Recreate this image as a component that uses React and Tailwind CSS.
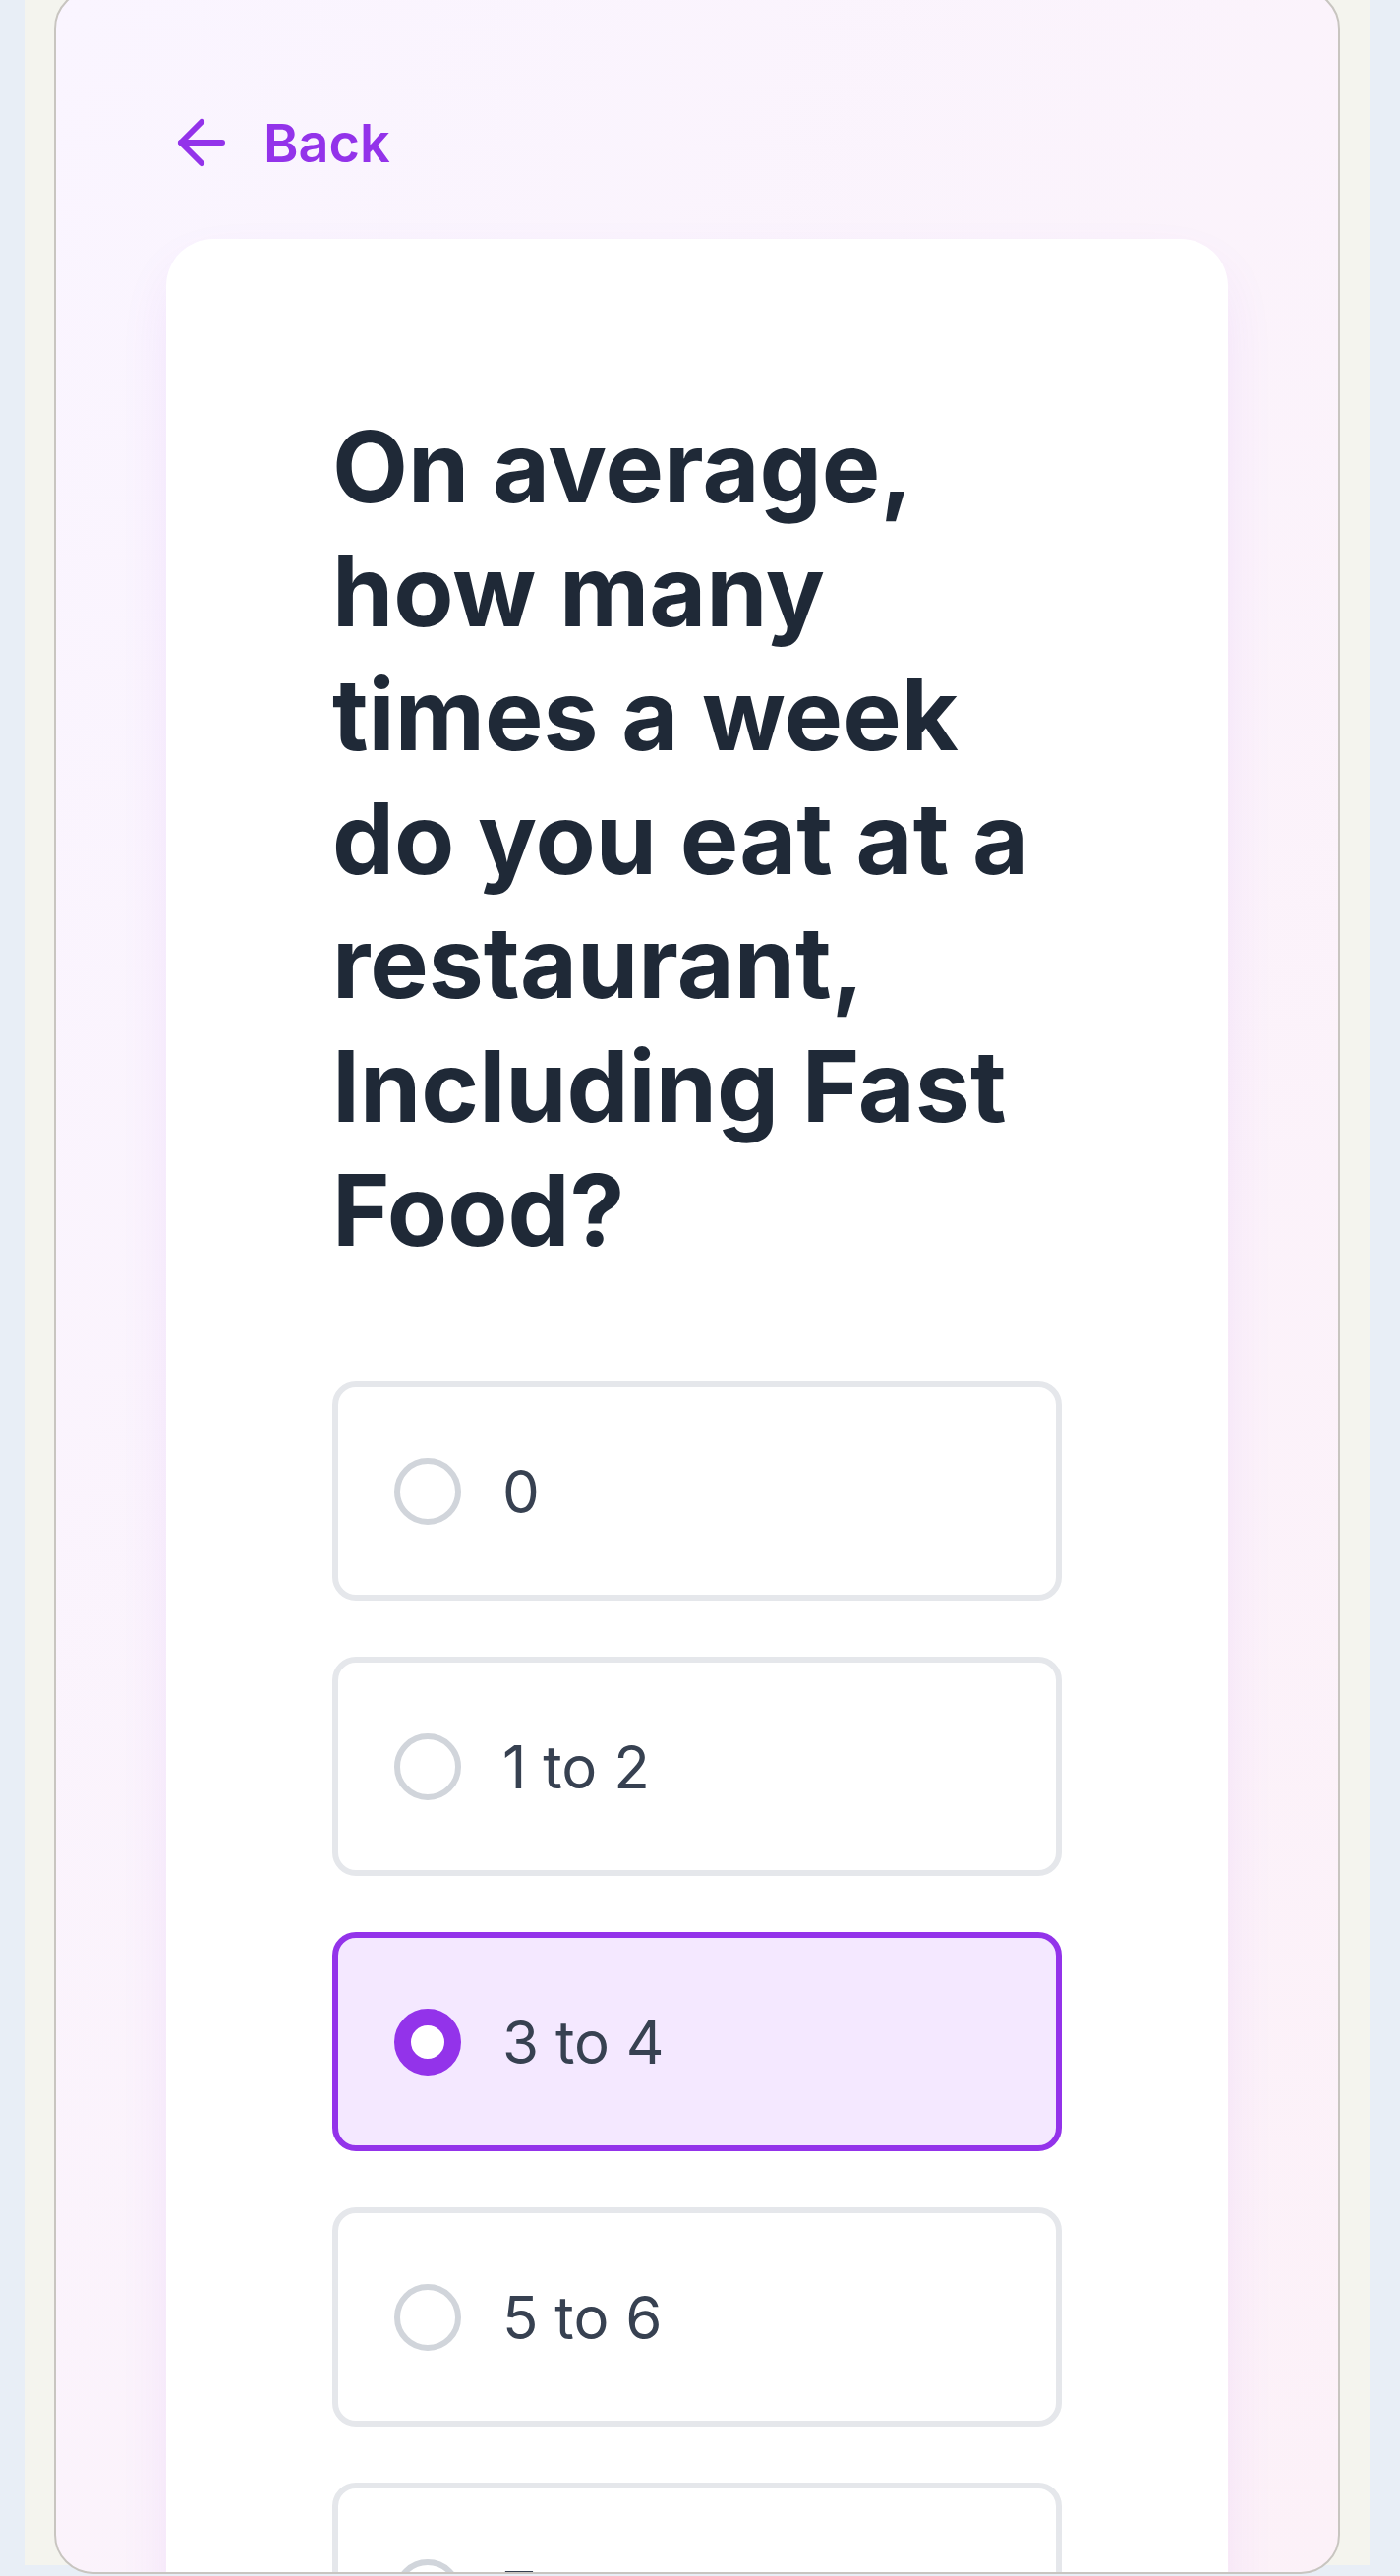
import React, { useState } from "react";
import { ArrowLeft } from "lucide-react";

const options = ["0", "1 to 2", "3 to 4", "5 to 6", "7 or more"];

function Option({ label, selected, onSelect }) {
  return (
    <button
      type="button"
      onClick={onSelect}
      className={`flex h-[223px] w-full items-center gap-[42px] rounded-[24px] border-[6px] pl-[57px] text-left ${
        selected ? "border-[#9333ea] bg-[#f4e8ff]" : "border-[#e5e7eb] bg-white"
      }`}
    >
      <span
        className={`h-[68px] w-[68px] shrink-0 rounded-full ${
          selected ? "border-[17px] border-[#9333ea] bg-white" : "border-[6px] border-[#d1d5db] bg-white"
        }`}
      />
      <span className="text-[60px] leading-[80px] text-[#374151]">{label}</span>
    </button>
  );
}

export default function App() {
  const [answer, setAnswer] = useState("3 to 4");

  return (
    <div className="h-[2620px] overflow-hidden bg-[#e8eef6] font-[Inter,sans-serif]">
      <div className="ml-[25px] h-full w-[1368px] bg-[#f4f4ee] px-[30px]">
        <div className="-mt-[11px] h-[2629px] overflow-hidden rounded-[40px] border-2 border-[#c8c5c0] bg-linear-to-br from-[#faf5ff] to-[#fcf1f8] px-[112px] pt-[118px]">
          <a href="#" className="flex h-[72px] items-center gap-[27px] text-[54px] font-semibold text-[#9333ea]">
            <ArrowLeft size={72} strokeWidth={2} />
            Back
          </a>

          <div className="mt-[62px] rounded-[48px] bg-white px-[169px] pt-[169px] pb-[169px] shadow-[0_25px_60px_-12px_rgba(147,51,234,0.12)]">
            <h1 className="mb-[111px] text-[100px] font-bold leading-[126px] text-[#1f2937]">
              On average, how many times a week do you eat at a restaurant, Including Fast Food?
            </h1>

            <div className="flex flex-col gap-[57px]">
              {options.map((option) => (
                <Option
                  key={option}
                  label={option}
                  selected={answer === option}
                  onSelect={() => setAnswer(option)}
                />
              ))}
            </div>
          </div>
        </div>
      </div>
    </div>
  );
}
